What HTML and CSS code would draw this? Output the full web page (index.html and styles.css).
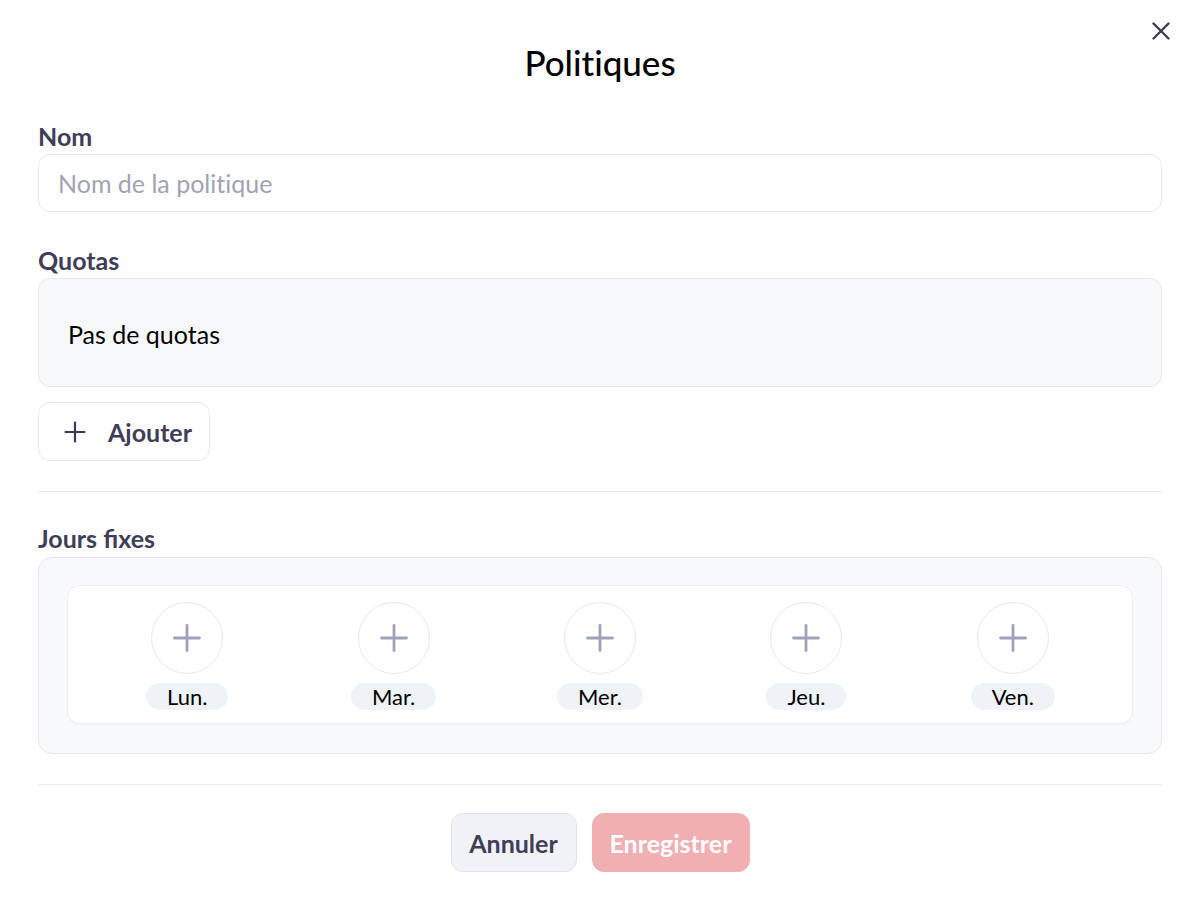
FILE: index.html
```html
<!DOCTYPE html>
<html lang="fr">
<head>
<meta charset="utf-8">
<title>Politiques</title>
<link rel="stylesheet" href="styles.css">
</head>
<body>
<div class="modal">
  <button class="close" aria-label="Fermer">
    <svg width="18" height="18" viewBox="0 0 18 18"><path d="M1.5 1.5L16.5 16.5M16.5 1.5L1.5 16.5" stroke="#3e3b57" stroke-width="2.4" stroke-linecap="round"/></svg>
  </button>
  <h1 class="title">Politiques</h1>

  <label class="label label-nom">Nom</label>
  <div class="input"><span class="placeholder">Nom de la politique</span></div>

  <label class="label label-quotas">Quotas</label>
  <div class="quota-box">Pas de quotas</div>
  <button class="add-btn">
    <svg width="22" height="22" viewBox="0 0 22 22"><path d="M11 1.5V20.5M1.5 11H20.5" stroke="#3e3b57" stroke-width="2.2" stroke-linecap="round"/></svg>
    <span>Ajouter</span>
  </button>

  <div class="divider first"></div>

  <label class="label label-jours">Jours fixes</label>
  <div class="days-box">
    <div class="days-card">
      <div class="day"><div class="circle"><svg width="28" height="28" viewBox="0 0 28 28"><path d="M14 1.5V26.5M1.5 14H26.5" stroke="#9ea2bc" stroke-width="2.8" stroke-linecap="round"/></svg></div><span class="pill">Lun.</span></div>
      <div class="day"><div class="circle"><svg width="28" height="28" viewBox="0 0 28 28"><path d="M14 1.5V26.5M1.5 14H26.5" stroke="#9ea2bc" stroke-width="2.8" stroke-linecap="round"/></svg></div><span class="pill">Mar.</span></div>
      <div class="day"><div class="circle"><svg width="28" height="28" viewBox="0 0 28 28"><path d="M14 1.5V26.5M1.5 14H26.5" stroke="#9ea2bc" stroke-width="2.8" stroke-linecap="round"/></svg></div><span class="pill">Mer.</span></div>
      <div class="day"><div class="circle"><svg width="28" height="28" viewBox="0 0 28 28"><path d="M14 1.5V26.5M1.5 14H26.5" stroke="#9ea2bc" stroke-width="2.8" stroke-linecap="round"/></svg></div><span class="pill">Jeu.</span></div>
      <div class="day"><div class="circle"><svg width="28" height="28" viewBox="0 0 28 28"><path d="M14 1.5V26.5M1.5 14H26.5" stroke="#9ea2bc" stroke-width="2.8" stroke-linecap="round"/></svg></div><span class="pill">Ven.</span></div>
    </div>
  </div>

  <div class="divider second"></div>

  <div class="actions">
    <button class="btn btn-cancel">Annuler</button>
    <button class="btn btn-save">Enregistrer</button>
  </div>
</div>
</body>
</html>
```

FILE: styles.css
```css
* { box-sizing: border-box; }
html, body {
  margin: 0;
  padding: 0;
  background: #ffffff;
  font-family: Lato, "Noto Sans", sans-serif;
  font-variant-ligatures: no-common-ligatures;
  color: #000;
}
.modal {
  position: relative;
  width: 1190px;
  min-height: 906px;
  padding: 42px 28px 0 38px;
  display: flex;
  flex-direction: column;
}
.close {
  position: absolute;
  top: 22px;
  left: 1152px;
  width: 18px;
  height: 18px;
  padding: 0;
  border: 0;
  background: none;
  display: flex;
}
.title {
  margin: 0;
  height: 40px;
  line-height: 40px;
  font-size: 35px;
  font-weight: 500;
  text-align: center;
  color: #000;
}
.label {
  display: block;
  height: 30px;
  line-height: 30px;
  font-size: 25px;
  font-weight: 700;
  color: #403d58;
}
.label-nom { margin-top: 39px; margin-bottom: 3px; }
.label-quotas { margin-top: 33px; margin-bottom: 3px; }
.label-jours { margin-top: 31px; margin-bottom: 4px; font-variant-ligatures: common-ligatures; }
.input {
  height: 58px;
  border: 1px solid #e7e8ec;
  border-radius: 12px;
  padding: 0 19px;
  display: flex;
  align-items: center;
  background: #fff;
}
.placeholder {
  font-size: 25px;
  color: #9fa3b2;
}
.quota-box {
  height: 109px;
  background: #f8f9fb;
  border: 1px solid #e6e8ee;
  border-radius: 12px;
  padding: 2px 30px 0 29px;
  display: flex;
  align-items: center;
  font-size: 25px;
  color: #000;
}
.add-btn {
  align-self: flex-start;
  margin-top: 15px;
  width: 172px;
  height: 59px;
  border: 1px solid #e7e8ec;
  border-radius: 12px;
  background: #fff;
  display: flex;
  align-items: center;
  padding: 0 0 0 25px;
  gap: 22px;
  font-family: inherit;
  font-size: 25px;
  font-weight: 700;
  color: #403d58;
}
.divider {
  height: 1px;
  background: #e8eaef;
}
.divider.first { margin-top: 30px; }
.divider.second { margin-top: 30px; }
.days-box {
  height: 197px;
  background: #f8f9fb;
  border: 1px solid #e4e7ee;
  border-radius: 14px;
  padding: 28px 29px 0 29px;
}
.days-card {
  height: 137px;
  background: #fff;
  border-radius: 12px;
  box-shadow: 0 0 0 1px #eceef3, 0 1px 3px rgba(30, 40, 80, 0.06);
  padding: 16px 16px 0 16px;
  display: grid;
  grid-template-columns: repeat(5, 1fr);
}
.day {
  display: flex;
  flex-direction: column;
  align-items: center;
  gap: 9px;
}
.circle {
  width: 72px;
  height: 72px;
  border-radius: 50%;
  border: 1px solid #e8e8ee;
  display: flex;
  align-items: center;
  justify-content: center;
}
.pill {
  height: 27px;
  line-height: 27px;
  padding: 0 21px;
  border-radius: 14px;
  background: #eff2f7;
  font-size: 22px;
  color: #000;
}
.actions {
  margin-top: 28px;
  display: flex;
  justify-content: center;
  gap: 15px;
}
.btn {
  height: 59px;
  border-radius: 12px;
  font-family: inherit;
  font-size: 25px;
  font-weight: 700;
  padding: 0;
}
.btn-cancel {
  width: 126px;
  background: #f0f2f7;
  border: 1px solid #dfe2ea;
  color: #403d58;
}
.btn-save {
  width: 158px;
  background: #f0b0b2;
  border: 1px solid #f0b0b2;
  color: #fff;
}
```
